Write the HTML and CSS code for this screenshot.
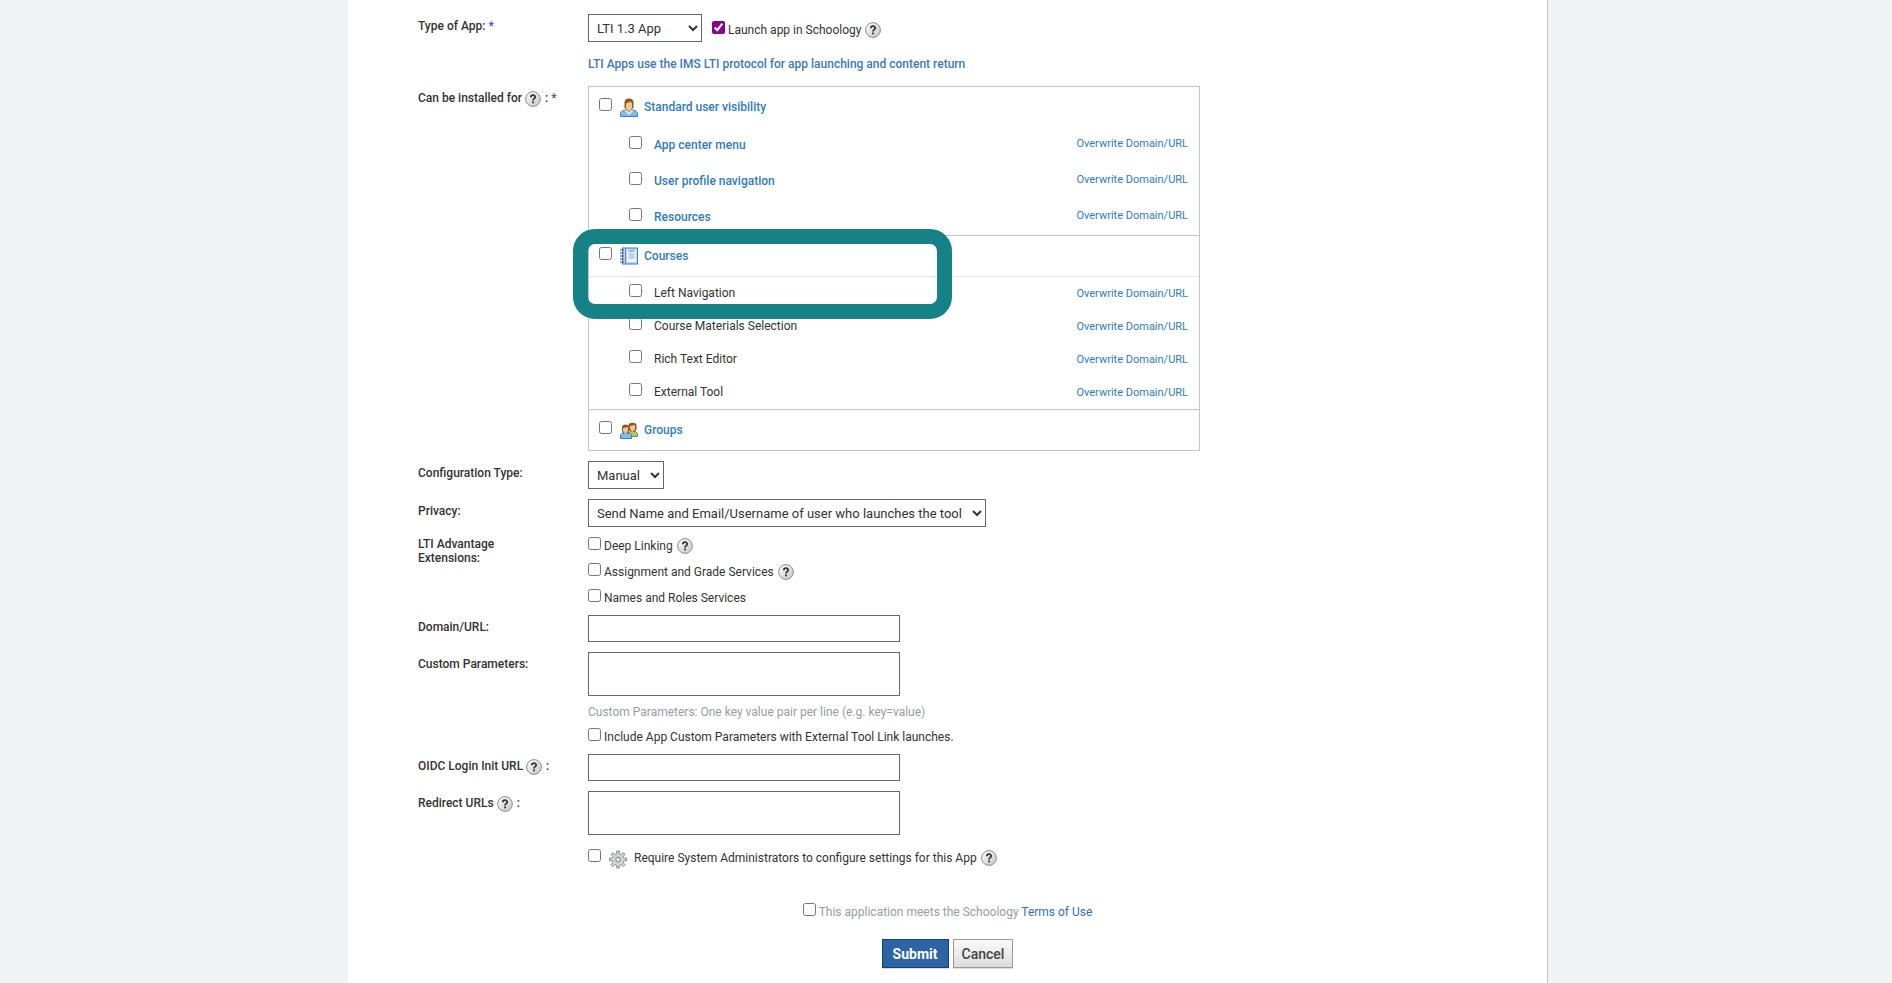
FILE: index.html
```html
<!DOCTYPE html>
<html lang="en">
<head>
  <meta charset="UTF-8">
  <meta name="viewport" content="width=device-width, initial-scale=1.0">
  <title>Add App</title>
  <link rel="stylesheet" href="styles.css">
</head>
<body>

  <svg class="defs" aria-hidden="true">
    <defs>
      <linearGradient id="help-bg" x1="0" y1="0" x2="1" y2="1">
        <stop offset="0" stop-color="#ffffff"/>
        <stop offset="1" stop-color="#c4c4c4"/>
      </linearGradient>
      <symbol id="help" viewBox="0 0 16 16">
        <circle cx="8" cy="8" r="7.4" fill="url(#help-bg)" stroke="#8c8c8c"/>
        <path d="M5.8 6.300C5.8 3.500 10.200 3.500 10.200 6.100C10.200 7.700 8 7.600 8 9.500" fill="none" stroke="#333" stroke-width="1.8"/>
        <rect x="7.1" y="10.500" width="1.8" height="1.800" fill="#333"/>
      </symbol>
      <symbol id="person" viewBox="0 0 18 19">
        <path d="M.5 18.5v-3c0-1.500 1.500-2.500 4-3.500h9c2.500 1 4 2 4 3.500v3z" fill="#7dbbf0" stroke="#3c7dc4"/>
        <path d="M4.500 12.500L9 17l4.500-4.500z" fill="#eef7ff"/>
        <path d="M7 10h4v3l-2 2-2-2z" fill="#d99a55"/>
        <path d="M4.500 9.500v-5C4.500 1.800 6 .5 9 .5s4.500 1.300 4.500 4v5l-2 2h-5z" fill="#8c5523"/>
        <path d="M6 5.500l4.500-2 1.500 2v4c0 1.500-1.500 3-3 3s-3-1.500-3-3z" fill="#f5c78a"/>
      </symbol>
      <symbol id="notebook" viewBox="0 0 18 18">
        <rect x="2.500" y=".5" width="15" height="16" fill="#b9d9f7" stroke="#3c7dc4"/>
        <path d="M5.500 1v15" stroke="#4a8fd4"/>
        <rect x="7" y="2.500" width="9" height="12" fill="#eef6fe"/>
        <path d="M8.500 3.500h6" stroke="#3c7dc4"/>
        <path d="M8.500 6.500h6M8.500 8.500h6M8.500 10.500h6" stroke="#9aa9b8"/>
        <path d="M0 2.500h4M0 5.500h4M0 8.500h4M0 11.500h4M0 14.500h4" stroke="#555"/>
      </symbol>
      <symbol id="group" viewBox="0 0 18 17">
        <path d="M7.500 14.500v-3l3-2h5l2 2v3z" fill="#a5cf6a" stroke="#6a9638"/>
        <path d="M8.500 7V3c0-3 8-3 8 0v4l-1 2h-6z" fill="#8c5523"/>
        <path d="M10 4l5-1v4l-2 2.500h-1L10 7z" fill="#f5c78a"/>
        <path d="M.5 16.500v-3.500l2-2h7l2 2v3.500z" fill="#7dbbf0" stroke="#3c7dc4"/>
        <path d="M2 9V5c0-3.500 7-3.500 7 0v4l-1 2H3z" fill="#8c5523"/>
        <path d="M3 6l5-1v4l-2 2.500H5L3 9z" fill="#f5c78a"/>
      </symbol>
      <symbol id="gear" viewBox="0 0 18 18">
        <path d="M7.700 3.200V.500h2.600v2.700l1.900.8 2-1.900 1.800 1.800-1.900 2 .8 1.800h2.600v2.600h-2.600l-.8 1.900 1.900 2-1.800 1.800-2-1.900-1.900.8v2.600H7.700v-2.600l-1.900-.8-2 1.900L2 14.200l1.900-2-.8-1.900H.500V7.700h2.600l.8-1.800L2 3.900l1.800-1.800 2 1.900z" fill="#d4d6d8" stroke="#85898d"/>
        <circle cx="9" cy="9" r="3.500" fill="#bfc2c5"/>
        <circle cx="9" cy="9" r="2" fill="#fff" stroke="#85898d"/>
      </symbol>
    </defs>
  </svg>

  <main class="page">
    <form class="app-form">

      <div class="row">
        <div class="row-label"><label for="app-type">Type of App:</label> <span class="required">*</span></div>
        <div>
          <div class="type-line">
            <select id="app-type" class="app-type"><option>LTI 1.3 App</option></select>
            <label class="check"><input type="checkbox" checked> <span>Launch app in Schoology</span> <svg class="help"><use href="#help"/></svg></label>
          </div>
          <p class="type-note">LTI Apps use the IMS LTI protocol for app launching and content return</p>
        </div>
      </div>

      <div class="row">
        <div class="row-label">Can be installed for <svg class="help"><use href="#help"/></svg> : <span class="required">*</span></div>
        <div class="install">
          <section class="install-group">
            <label class="install-head"><input type="checkbox"><svg class="icon"><use href="#person"/></svg><span>Standard user visibility</span></label>
            <ul class="options strong">
              <li><label><input type="checkbox"><span>App center menu</span></label><a href="#">Overwrite Domain/URL</a></li>
              <li><label><input type="checkbox"><span>User profile navigation</span></label><a href="#">Overwrite Domain/URL</a></li>
              <li><label><input type="checkbox"><span>Resources</span></label><a href="#">Overwrite Domain/URL</a></li>
            </ul>
          </section>
          <section class="install-group">
            <label class="install-head"><input type="checkbox"><svg class="icon"><use href="#notebook"/></svg><span>Courses</span></label>
            <ul class="options divided">
              <li><label><input type="checkbox"><span>Left Navigation</span></label><a href="#">Overwrite Domain/URL</a></li>
              <li><label><input type="checkbox"><span>Course Materials Selection</span></label><a href="#">Overwrite Domain/URL</a></li>
              <li><label><input type="checkbox"><span>Rich Text Editor</span></label><a href="#">Overwrite Domain/URL</a></li>
              <li><label><input type="checkbox"><span>External Tool</span></label><a href="#">Overwrite Domain/URL</a></li>
            </ul>
            <div class="highlight"></div>
          </section>
          <section class="install-group">
            <label class="install-head"><input type="checkbox"><svg class="icon"><use href="#group"/></svg><span>Groups</span></label>
          </section>
        </div>
      </div>

      <div class="row">
        <div class="row-label"><label for="config-type">Configuration Type:</label></div>
        <div><select id="config-type"><option>Manual</option></select></div>
      </div>

      <div class="row">
        <div class="row-label"><label for="privacy">Privacy:</label></div>
        <div><select id="privacy"><option>Send Name and Email/Username of user who launches the tool</option></select></div>
      </div>

      <div class="row">
        <div class="row-label flush">LTI Advantage<br>Extensions:</div>
        <div class="checks">
          <label class="check"><input type="checkbox"> <span>Deep Linking</span> <svg class="help"><use href="#help"/></svg></label>
          <label class="check"><input type="checkbox"> <span>Assignment and Grade Services</span> <svg class="help"><use href="#help"/></svg></label>
          <label class="check"><input type="checkbox"> <span>Names and Roles Services</span></label>
        </div>
      </div>

      <div class="row">
        <div class="row-label"><label for="domain">Domain/URL:</label></div>
        <div><input type="text" id="domain"></div>
      </div>

      <div class="row">
        <div class="row-label"><label for="params">Custom Parameters:</label></div>
        <div class="checks">
          <textarea id="params"></textarea>
          <p class="hint">Custom Parameters: One key value pair per line (e.g. key=value)</p>
          <label class="check"><input type="checkbox"> <span>Include App Custom Parameters with External Tool Link launches.</span></label>
        </div>
      </div>

      <div class="row">
        <div class="row-label"><label for="oidc">OIDC Login Init URL</label> <svg class="help"><use href="#help"/></svg> :</div>
        <div><input type="text" id="oidc"></div>
      </div>

      <div class="row">
        <div class="row-label"><label for="redirects">Redirect URLs</label> <svg class="help"><use href="#help"/></svg> :</div>
        <div class="checks">
          <textarea id="redirects"></textarea>
          <label class="check admin"><input type="checkbox"> <svg class="icon"><use href="#gear"/></svg> <span>Require System Administrators to configure settings for this App</span> <svg class="help"><use href="#help"/></svg></label>
        </div>
      </div>

      <div class="terms">
        <label class="check"><input type="checkbox"> <span>This application meets the Schoology <a href="#">Terms of Use</a></span></label>
      </div>

      <div class="buttons">
        <button type="submit" class="submit">Submit</button>
        <button type="button" class="cancel">Cancel</button>
      </div>

    </form>
  </main>

</body>
</html>
```
FILE: styles.css
```css
* {
  box-sizing: border-box;
}
body {
  margin: 0;
  padding-left: 4px;
  background-color: #f1f3f5;
  color: #333;
  font-family: Roboto, sans-serif;
  font-size: 12px;
  line-height: 16px;
}
a {
  color: #2f7cc0;
  text-decoration: none;
}
p, ul {
  margin: 0;
  padding: 0;
}
.defs {
  position: absolute;
  width: 0;
  height: 0;
}
.page {
  max-width: 1200px;
  min-height: 100vh;
  margin: 0 auto;
  padding: 14px 70px 0;
  background-color: #fff;
  border-right: 1px solid #c4c4c4;
}
.row {
  display: grid;
  grid-template-columns: 170px 1fr;
  margin-bottom: 10px;
}
.row-label {
  padding-top: 5px;
  line-height: 14px;
  font-weight: 500;
}
.row-label.flush {
  padding-top: 0;
}
.required {
  color: #4a4ae0;
}
.help {
  width: 16px;
  height: 16px;
  margin: -1px 1px -1px 0;
  vertical-align: middle;
}
.icon {
  width: 18px;
  height: 19px;
}

/* controls */
input[type="checkbox"] {
  flex: none;
  width: 13px;
  height: 13px;
  margin: 0;
  accent-color: #8b008b;
}
select, input[type="text"], textarea {
  display: block;
  border: 1px solid #666;
  border-radius: 0;
  background-color: #fff;
  color: #333;
  font-family: inherit;
  font-size: 13px;
}
select {
  height: 28px;
  padding: 0 7px 0 4px;
}
.app-type {
  width: 114px;
}
input[type="text"], textarea {
  width: 312px;
  height: 27px;
}
textarea {
  height: 44px;
  resize: none;
}
.check {
  display: flex;
  align-items: flex-start;
  height: 16px;
  line-height: 18px;
}
.check span {
  margin-left: 3px;
}
.check .help {
  margin: 1px 0 0 4px;
}
.checks {
  display: flex;
  flex-direction: column;
  gap: 10px;
}
.type-line {
  display: flex;
  align-items: flex-start;
  gap: 10px;
}
.type-line .check {
  margin-top: 7px;
}
.type-note {
  padding: 14px 0 4px;
  color: #3d78ba;
  font-weight: 500;
}
.hint {
  line-height: 12px;
  color: #979ca5;
}

/* install locations */
.install {
  width: 612px;
  border: 1px solid #c4c4c4;
}
.install-group {
  position: relative;
}
.install-group + .install-group {
  border-top: 1px solid #c4c4c4;
}
.install-head {
  display: flex;
  align-items: flex-start;
  height: 40px;
  padding: 11px 10px 0;
  color: #2f7cc0;
  font-weight: 500;
  line-height: 19px;
}
.install-head .icon {
  margin: 0 6px 0 8px;
}
.options {
  list-style: none;
}
.options li {
  display: flex;
  justify-content: space-between;
  height: 33px;
  padding: 7px 11px 0 40px;
}
.options.strong li {
  height: 36px;
  padding-top: 9px;
}
.options.divided {
  border-top: 1px solid #e6e6e6;
}
.options label {
  display: flex;
  align-items: flex-start;
  gap: 12px;
  line-height: 18px;
}
.options a {
  font-size: 11px;
  line-height: 16px;
}
.options.divided a {
  line-height: 20px;
}
.strong label {
  color: #2f7cc0;
  font-weight: 500;
}
.highlight {
  position: absolute;
  top: -7px;
  left: -16px;
  width: 379px;
  height: 90px;
  border: 15px solid #178188;
  border-radius: 22px;
  pointer-events: none;
}

/* form footer */
.admin {
  margin-top: 4px;
}
.admin .icon {
  margin: 1px 4px 0 8px;
}
.terms {
  display: flex;
  justify-content: center;
  margin-top: 38px;
  color: #979ca5;
}
.terms a {
  color: #3370b5;
}
.buttons {
  display: flex;
  justify-content: center;
  gap: 4px;
  margin-top: 20px;
}
.buttons button {
  height: 29px;
  padding: 0 8px;
  border: 1px solid #999;
  box-shadow: 0 1px 0 #ddd;
  background-image: linear-gradient(#fafafa, #dcdcdc);
  color: #444;
  font-family: inherit;
  font-size: 14px;
  font-weight: 500;
}
.buttons .submit {
  padding: 0 10px;
  border-color: #134271;
  background: #2d64a3;
  color: #fff;
  font-weight: 700;
}
```
